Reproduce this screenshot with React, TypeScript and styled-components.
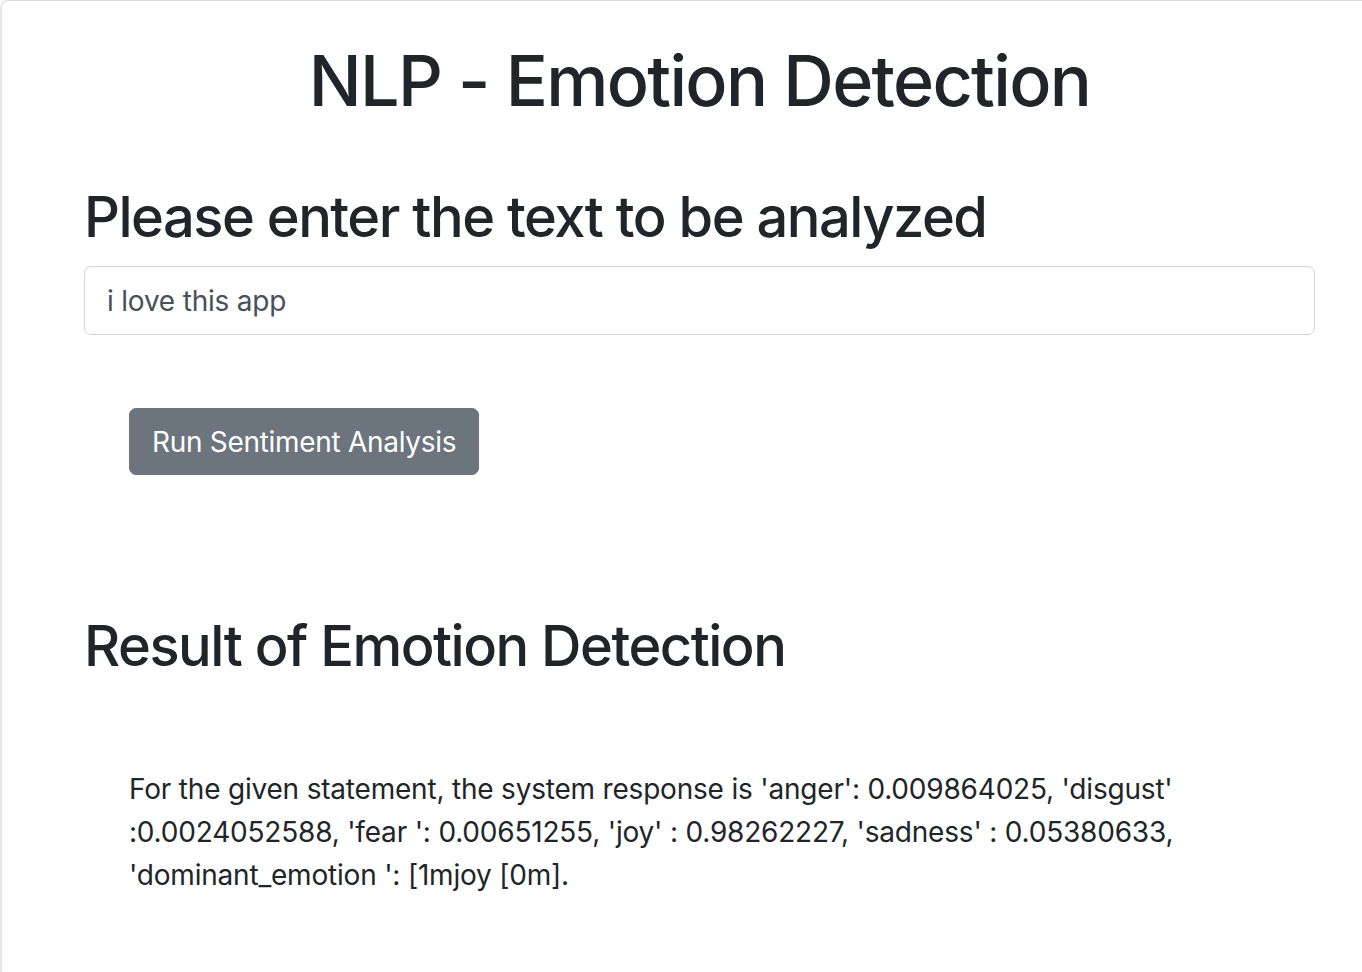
import styled, { createGlobalStyle } from 'styled-components';

const GlobalStyle = createGlobalStyle`
  html, body {
    margin: 0;
    padding: 0;
    background: #ffffff;
  }
  body {
    font-family: Inter, "Liberation Sans", Arial, sans-serif;
    color: #212529;
  }
  * {
    box-sizing: border-box;
  }
`;

const Frame = styled.div`
  min-height: 100vh;
  border-top: 1px solid #dcdcdc;
  border-left: 2px solid #e6e6e6;
  border-top-left-radius: 8px;
  background: #fff;
`;

const Container = styled.div`
  padding: 0 47px 40px 82px;
`;

const Title = styled.h1`
  margin: 38px 0 61px;
  font-size: 70px;
  font-weight: 500;
  line-height: 1.2;
  text-align: center;
  letter-spacing: -1.7px;
`;

const Heading = styled.h2<{ $top?: number }>`
  margin: ${(p) => p.$top ?? 0}px 0 15px;
  font-size: 56px;
  font-weight: 500;
  line-height: 1.2;
  letter-spacing: -1.5px;
`;

const TextInput = styled.input`
  display: block;
  width: 100%;
  height: 69px;
  padding: 0 22px;
  font-family: inherit;
  font-size: 28px;
  letter-spacing: -0.2px;
  color: #495057;
  border: 1px solid #ced4da;
  border-radius: 7px;
  background: #fff;
  outline: none;
`;

const Indented = styled.div<{ $top: number }>`
  margin-top: ${(p) => p.$top}px;
  padding-left: 45px;
`;

const Button = styled.button`
  height: 67px;
  padding: 0 22px;
  font-family: inherit;
  font-size: 28px;
  letter-spacing: -0.3px;
  color: #fff;
  background: #6c757d;
  border: 1px solid #6c757d;
  border-radius: 7px;
  cursor: pointer;
`;

const Result = styled.p`
  margin: 0;
  font-size: 28px;
  line-height: 43px;
  letter-spacing: -0.2px;
  color: #212529;
`;

export default function App() {
  return (
    <>
      <GlobalStyle />
      <Frame>
        <Container>
          <Title>NLP - Emotion Detection</Title>
          <Heading>Please enter the text to be analyzed</Heading>
          <TextInput defaultValue="i love this app" />
          <Indented $top={73}>
            <Button>Run Sentiment Analysis</Button>
          </Indented>
          <Heading $top={138}>Result of Emotion Detection</Heading>
          <Indented $top={88}>
            <Result>
              For the given statement, the system response is 'anger': 0.009864025, 'disgust'
              :0.0024052588, 'fear ': 0.00651255, 'joy' : 0.98262227, 'sadness' : 0.05380633,
              'dominant_emotion ': [1mjoy [0m].
            </Result>
          </Indented>
        </Container>
      </Frame>
    </>
  );
}
